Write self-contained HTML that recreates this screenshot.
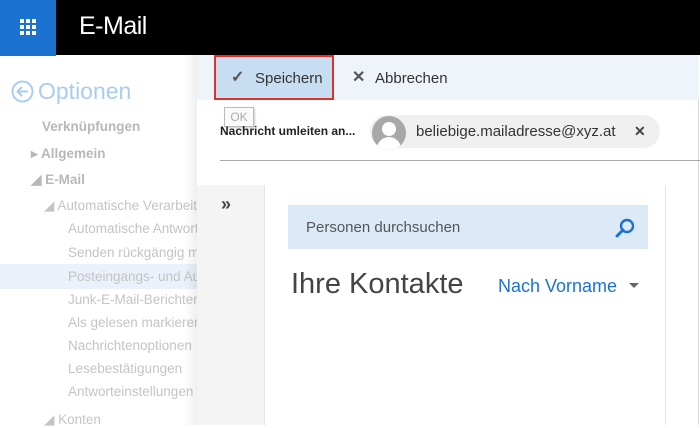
<!DOCTYPE html>
<html><head><meta charset="utf-8"><style>
*{margin:0;padding:0;box-sizing:border-box}
body{width:700px;height:425px;overflow:hidden;background:#fff;font-family:"Liberation Sans",sans-serif;position:relative}
.a{position:absolute;white-space:nowrap}
.l{color:#c4c4c4;font-size:13.5px}
</style></head><body>
<div class="a" style="left:0;top:0;width:700px;height:55px;background:#000"></div>
<div class="a" style="left:0;top:0;width:56px;height:56px;background:#1b73cf"></div>
<svg class="a" style="left:19px;top:18px" width="18" height="18" viewBox="0 0 18 18" fill="#fff">
<rect x="1" y="1" width="4" height="4"/><rect x="7" y="1" width="4" height="4"/><rect x="13" y="1" width="4" height="4"/>
<rect x="1" y="7" width="4" height="4"/><rect x="7" y="7" width="4" height="4"/><rect x="13" y="7" width="4" height="4"/>
<rect x="1" y="13" width="4" height="4"/><rect x="7" y="13" width="4" height="4"/><rect x="13" y="13" width="4" height="4"/></svg>
<div class="a" style="left:79px;top:12px;color:#fff;font-size:25px;letter-spacing:-0.5px">E-Mail</div>

<svg class="a" style="left:11px;top:80px" width="23" height="23" viewBox="0 0 23 23"><circle cx="11.5" cy="11.5" r="10" fill="none" stroke="#a9cdf0" stroke-width="2"/><path d="M17 11.5H7M11 7l-4.5 4.5L11 16" fill="none" stroke="#a9cdf0" stroke-width="2"/></svg>
<div class="a" style="left:38px;top:78px;color:#a9cdf0;font-size:23px">Optionen</div>
<div class="a l" style="left:42px;top:119px;font-weight:bold;color:#b8b8b8">Verknüpfungen</div>
<div class="a l" style="left:31px;top:146px;font-weight:bold;color:#b8b8b8">▸ Allgemein</div>
<div class="a l" style="left:31px;top:172px;font-weight:bold;color:#b8b8b8">◢ E-Mail</div>
<div class="a l" style="left:44px;top:198px">◢ Automatische Verarbeitung</div>
<div class="a l" style="left:68px;top:221px">Automatische Antworten</div>
<div class="a l" style="left:68px;top:245px">Senden rückgängig machen</div>
<div class="a" style="left:0;top:264px;width:200px;height:25px;background:#eaf1fa"></div>
<div class="a l" style="left:68px;top:269px">Posteingangs- und Aufräumregeln</div>
<div class="a l" style="left:68px;top:292px">Junk-E-Mail-Berichterstattung</div>
<div class="a l" style="left:68px;top:315px">Als gelesen markieren</div>
<div class="a l" style="left:68px;top:338px">Nachrichtenoptionen</div>
<div class="a l" style="left:68px;top:361px">Lesebestätigungen</div>
<div class="a l" style="left:68px;top:384px">Antworteinstellungen</div>
<div class="a l" style="left:44px;top:412px">◢ Konten</div>

<div class="a" style="left:184px;top:55px;width:14px;height:370px;background:linear-gradient(to right,rgba(255,255,255,0),rgba(0,0,0,.07))"></div>
<div class="a" style="left:197px;top:55px;width:502px;height:370px;background:#fff;border-right:1px solid #d8d8d8"></div>
<div class="a" style="left:197px;top:55px;width:502px;height:45px;background:#eef4fa"></div>
<div class="a" style="left:214px;top:55px;width:120px;height:45px;background:#c7def2;border:2px solid #e0322b"></div>
<div class="a" style="left:231px;top:67px;color:#555;font-size:16px;font-weight:bold">✓</div>
<div class="a" style="left:255px;top:70px;color:#333;font-size:15px">Speichern</div>
<div class="a" style="left:352px;top:67px;color:#555;font-size:16px;font-weight:bold">✕</div>
<div class="a" style="left:375px;top:70px;color:#333;font-size:15px">Abbrechen</div>

<div class="a" style="left:224px;top:107px;width:30px;height:20px;border:1px solid #bbb;background:#fafafa;color:#aaa;font-size:12px;text-align:center;line-height:18px;box-shadow:1px 1px 2px rgba(0,0,0,.2)">OK</div>
<div class="a" style="left:220px;top:124px;color:#222;font-size:12px;font-weight:bold">Nachricht umleiten an...</div>
<div class="a" style="left:370px;top:115px;width:290px;height:33px;border-radius:17px;background:#f0f0f0"></div>
<div class="a" style="left:372px;top:116px;width:34px;height:34px;border-radius:50%;background:#a8a8a8;overflow:hidden">
<div class="a" style="left:10px;top:6px;width:14px;height:14px;border-radius:50%;background:#fff"></div>
<div class="a" style="left:5px;top:21px;width:24px;height:20px;border-radius:12px 12px 0 0;background:#fff"></div></div>
<div class="a" style="left:416px;top:123px;color:#333;font-size:15px">beliebige.mailadresse@xyz.at</div>
<div class="a" style="left:634px;top:123px;color:#444;font-size:14px;font-weight:bold">✕</div>
<div class="a" style="left:220px;top:160px;width:480px;height:1px;background:#aaa"></div>

<div class="a" style="left:197px;top:185px;width:68px;height:240px;background:#f4f4f4;border-right:1px solid #e4e4e4"></div>
<div class="a" style="left:221px;top:194px;color:#444;font-size:18px;font-weight:bold">»</div>
<div class="a" style="left:288px;top:205px;width:360px;height:44px;background:#dce9f6"></div>
<div class="a" style="left:306px;top:219px;color:#555;font-size:15px">Personen durchsuchen</div>
<svg class="a" style="left:615px;top:217px" width="22" height="22" viewBox="0 0 22 22"><circle cx="12" cy="9" r="6" fill="none" stroke="#1b73cf" stroke-width="2.4"/><path d="M8 13L2 19" stroke="#1b73cf" stroke-width="3" stroke-linecap="round"/></svg>
<div class="a" style="left:291px;top:268px;color:#444;font-size:29px;font-weight:300">Ihre Kontakte</div>
<div class="a" style="left:498px;top:276px;color:#1b73cf;font-size:18px">Nach Vorname</div>
<div class="a" style="left:629px;top:283px;width:0;height:0;border-left:5px solid transparent;border-right:5px solid transparent;border-top:5px solid #666"></div>
<div class="a" style="left:665px;top:185px;width:1px;height:240px;background:#e4e4e4"></div>
</body></html>
